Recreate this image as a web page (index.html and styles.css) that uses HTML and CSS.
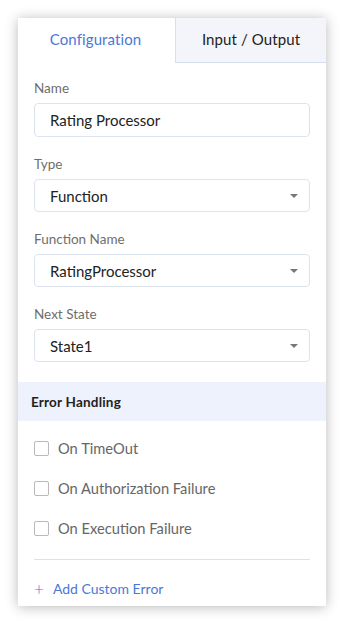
FILE: index.html
```html
<!DOCTYPE html>
<html>
<head>
<meta charset="utf-8">
<link rel="stylesheet" href="styles.css">
</head>
<body>
<div class="card">
  <div class="tabs">
    <div class="tab active">Configuration</div>
    <div class="tab">Input / Output</div>
  </div>
  <div class="form">
    <div class="field">
      <div class="label">Name</div>
      <div class="box input">Rating Processor</div>
    </div>
    <div class="field">
      <div class="label">Type</div>
      <div class="box select"><span>Function</span><span class="caret"></span></div>
    </div>
    <div class="field">
      <div class="label">Function Name</div>
      <div class="box select"><span>RatingProcessor</span><span class="caret"></span></div>
    </div>
    <div class="field">
      <div class="label">Next State</div>
      <div class="box select"><span>State1</span><span class="caret"></span></div>
    </div>
  </div>
  <div class="section-head">Error Handling</div>
  <div class="checks">
    <label class="check"><span class="cb"></span>On TimeOut</label>
    <label class="check"><span class="cb"></span>On Authorization Failure</label>
    <label class="check"><span class="cb"></span>On Execution Failure</label>
  </div>
  <div class="divider"></div>
  <div class="add"><span class="plus">+</span>Add Custom Error</div>
</div>
</body>
</html>
```
FILE: styles.css
```css
* { box-sizing: border-box; }
html, body { margin: 0; padding: 0; background: #fff; }
body {
  font-family: Lato, "Open Sans", sans-serif;
  padding: 18px 19px 18px 18px;
  color: #222;
}
.card {
  width: 308px;
  background: #fff;
  box-shadow: 0 1px 12px rgba(0, 0, 0, 0.28);
  padding-bottom: 8px;
}
.tabs {
  display: flex;
  height: 45px;
}
.tab {
  display: flex;
  align-items: center;
  justify-content: center;
  font-size: 15px;
  color: #222;
  padding-bottom: 3px;
  letter-spacing: 0.1px;
}
.tab.active {
  width: 157px;
  color: #4a78d6;
  padding-right: 2px;
}
.tab:not(.active) {
  flex: 1;
  background: #f3f5fa;
  border-left: 1px solid #d6def0;
  border-bottom: 1px solid #d6def0;
  padding-bottom: 2px;
}
.form {
  padding: 17px 16px 0;
}
.field {
  margin-bottom: 19px;
}
.field:last-child { margin-bottom: 20px; }
.label {
  font-size: 13.5px;
  line-height: 16px;
  color: #6e6e6e;
  margin-bottom: 7px;
}
.box {
  height: 34px;
  border: 1px solid #dde3ee;
  border-radius: 4px;
  padding: 0 15px;
  font-size: 15px;
  display: flex;
  align-items: center;
  justify-content: space-between;
  color: #222;
}
.select { height: 33px; padding-right: 11px; }
.caret {
  width: 0; height: 0;
  border-left: 4px solid transparent;
  border-right: 4px solid transparent;
  border-top: 4px solid #777;
}
.section-head {
  background: #eef2fd;
  height: 39px;
  display: flex;
  align-items: center;
  padding-left: 13px;
  font-size: 13.5px;
  letter-spacing: 0.2px;
  font-weight: bold;
  color: #222;
}
.checks {
  padding: 7px 16px 0;
}
.check {
  height: 40px;
  display: flex;
  align-items: center;
  font-size: 14.7px;
  color: #666;
}
.cb {
  width: 15px; height: 15px;
  border: 1px solid #b9b9b9;
  border-radius: 2px;
  margin-right: 9px;
  background: #fff;
}
.divider {
  margin: 11px 16px 0;
  height: 1px;
  background: #e1e1e1;
}
.add {
  margin: 18px 16px 0;
  height: 20px;
  display: flex;
  align-items: center;
  font-size: 14px;
  color: #4a78d6;
}
.plus {
  font-size: 17px;
  font-weight: 300;
  margin-right: 9px;
  line-height: 1;
}
```
